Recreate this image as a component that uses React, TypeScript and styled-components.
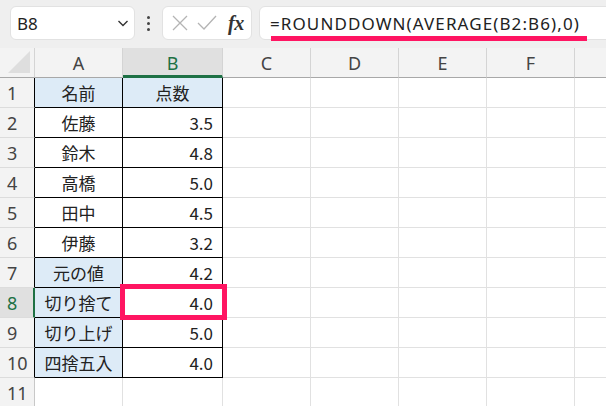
import React from "react";
import styled, { createGlobalStyle } from "styled-components";

const Global = createGlobalStyle`
  html, body { margin: 0; padding: 0; background: #ffffff; }
  body { width: 606px; height: 406px; overflow: hidden; font-family: "Noto Sans CJK JP", "Noto Sans", sans-serif; }
`;

const Page = styled.div`
  width: 606px;
  height: 406px;
  overflow: hidden;
  display: flex;
  flex-direction: column;
  position: relative;
`;

const Toolbar = styled.div`
  height: 48px;
  flex: none;
  box-sizing: border-box;
  background: #efefef;
  display: flex;
  align-items: flex-start;
  padding: 6px 0 0 10px;
  white-space: nowrap;
`;

const Box = styled.div<{ $w: number }>`
  box-sizing: border-box;
  flex: none;
  width: ${(p) => p.$w}px;
  height: 34px;
  background: #ffffff;
  border: 1px solid #e2e2e2;
  border-radius: 6px;
  display: flex;
  align-items: center;
  position: relative;
`;

const NameText = styled.span`
  font-family: "Noto Sans", sans-serif;
  font-size: 17px;
  color: #222;
  padding-left: 6px;
  flex: 1;
`;

const Chevron = styled.svg`
  width: 14px;
  height: 14px;
  margin-right: 4px;
`;

const Dots = styled.div`
  width: 27px;
  height: 34px;
  flex: none;
  display: flex;
  flex-direction: column;
  align-items: center;
  justify-content: center;
  gap: 3px;
  & > i {
    width: 3px;
    height: 3px;
    border-radius: 50%;
    background: #444;
    display: block;
  }
`;

const FxIcons = styled.div`
  display: flex;
  align-items: center;
  gap: 6px;
  padding-left: 7px;
`;

const Fx = styled.span`
  font-family: "Liberation Serif", serif;
  font-style: italic;
  font-weight: bold;
  font-size: 20px;
  color: #333;
  margin-left: 4px;
  letter-spacing: -0.5px;
`;

const Spacer = styled.div`
  width: 7px;
  flex: none;
`;

const FormulaText = styled.span`
  font-family: "Noto Sans", sans-serif;
  font-size: 17px;
  letter-spacing: 1.1px;
  color: #222;
  padding-left: 10px;
`;

const Underline = styled.div`
  position: absolute;
  left: 11px;
  top: 29px;
  width: 316px;
  height: 5px;
  background: #ff1562;
`;

const Grid = styled.div`
  display: grid;
  grid-template-columns: 35px 88px 100px 88px 88px 88px 88px 40px;
  grid-auto-rows: 30px;
  flex: none;
`;

const Corner = styled.div`
  box-sizing: border-box;
  background: #f3f3f3;
  border-right: 1px solid #d4d4d4;
  border-bottom: 1px solid #a8a8a8;
  position: relative;
  &::after {
    content: "";
    position: absolute;
    right: 4px;
    bottom: 4px;
    width: 0;
    height: 0;
    border-left: 22px solid transparent;
    border-bottom: 22px solid #dedede;
  }
`;

const ColHead = styled.div<{ $sel?: boolean }>`
  box-sizing: border-box;
  background: ${(p) => (p.$sel ? "#e0e0e0" : "#f3f3f3")};
  border-right: 1px solid #d4d4d4;
  border-bottom: ${(p) => (p.$sel ? "3px solid #1e7145" : "1px solid #a8a8a8")};
  display: flex;
  align-items: center;
  justify-content: center;
  font-family: "Noto Sans", sans-serif;
  font-size: 18px;
  color: ${(p) => (p.$sel ? "#1e7145" : "#444")};
  padding-top: ${(p) => (p.$sel ? "2px" : "0")};
`;

const RowHead = styled.div<{ $sel?: boolean; $edge?: boolean }>`
  box-sizing: border-box;
  background: ${(p) => (p.$sel ? "#e0e0e0" : "#f3f3f3")};
  border-right: ${(p) =>
    p.$sel ? "2px solid #1e7145" : p.$edge ? "1px solid #000" : "1px solid #c8c8c8"};
  border-bottom: 1px solid #dcdcdc;
  display: flex;
  align-items: center;
  padding-left: 7px;
  font-family: "Noto Sans", sans-serif;
  font-size: 18px;
  color: ${(p) => (p.$sel ? "#1e7145" : "#444")};
`;

const Cell = styled.div<{ $table?: boolean; $fill?: boolean; $align?: "center" | "right" }>`
  box-sizing: border-box;
  background: ${(p) => (p.$fill ? "#ddebf7" : "#ffffff")};
  border-right: 1px solid ${(p) => (p.$table ? "#000" : "#e1e1e1")};
  border-bottom: 1px solid ${(p) => (p.$table ? "#000" : "#e1e1e1")};
  display: flex;
  align-items: center;
  justify-content: ${(p) => (p.$align === "right" ? "flex-end" : "center")};
  padding-right: ${(p) => (p.$align === "right" ? "9px" : "0")};
  font-family: "Noto Sans CJK JP", sans-serif;
  font-size: 17px;
  color: #222;
  white-space: nowrap;
`;

const Highlight = styled.div`
  position: absolute;
  left: 120px;
  top: 284px;
  width: 107px;
  height: 36px;
  box-sizing: border-box;
  border: 5px solid #ff1562;
  pointer-events: none;
`;

const cols = ["A", "B", "C", "D", "E", "F", ""];

const data: [string, string, boolean][] = [
  ["名前", "点数", true],
  ["佐藤", "3.5", false],
  ["鈴木", "4.8", false],
  ["高橋", "5.0", false],
  ["田中", "4.5", false],
  ["伊藤", "3.2", false],
  ["元の値", "4.2", true],
  ["切り捨て", "4.0", true],
  ["切り上げ", "5.0", true],
  ["四捨五入", "4.0", true],
];

export default function App() {
  const rows = [];
  for (let r = 1; r <= 11; r++) {
    const d = data[r - 1];
    rows.push(
      <React.Fragment key={r}>
        <RowHead $sel={r === 8} $edge={!!d}>{r}</RowHead>
        {d ? (
          <>
            <Cell $table $fill={d[2]}>{d[0]}</Cell>
            <Cell $table $fill={r === 1} $align={r === 1 ? "center" : "right"}>
              {d[1]}
            </Cell>
          </>
        ) : (
          <>
            <Cell />
            <Cell />
          </>
        )}
        <Cell />
        <Cell />
        <Cell />
        <Cell />
        <Cell />
      </React.Fragment>
    );
  }

  return (
    <Page>
      <Global />
      <Toolbar>
        <Box $w={125}>
          <NameText>B8</NameText>
          <Chevron viewBox="0 0 14 14">
            <path d="M2.5 5 L7 9.5 L11.5 5" fill="none" stroke="#333" strokeWidth="1.4" />
          </Chevron>
        </Box>
        <Dots>
          <i />
          <i />
          <i />
        </Dots>
        <Box $w={90}>
          <FxIcons>
            <svg width="20" height="20" viewBox="0 0 20 20">
              <path d="M3 3 L17 17 M17 3 L3 17" stroke="#b4b4b4" strokeWidth="1.3" fill="none" />
            </svg>
            <svg width="22" height="20" viewBox="0 0 22 20">
              <path d="M2 10 L8 16 L20 3" stroke="#b4b4b4" strokeWidth="1.3" fill="none" />
            </svg>
            <Fx>fx</Fx>
          </FxIcons>
        </Box>
        <Spacer />
        <Box $w={360}>
          <FormulaText>=ROUNDDOWN(AVERAGE(B2:B6),0)</FormulaText>
          <Underline />
        </Box>
      </Toolbar>
      <Grid>
        <Corner />
        {cols.map((c, i) => (
          <ColHead key={i} $sel={c === "B"}>
            {c}
          </ColHead>
        ))}
        {rows}
      </Grid>
      <Highlight />
    </Page>
  );
}
